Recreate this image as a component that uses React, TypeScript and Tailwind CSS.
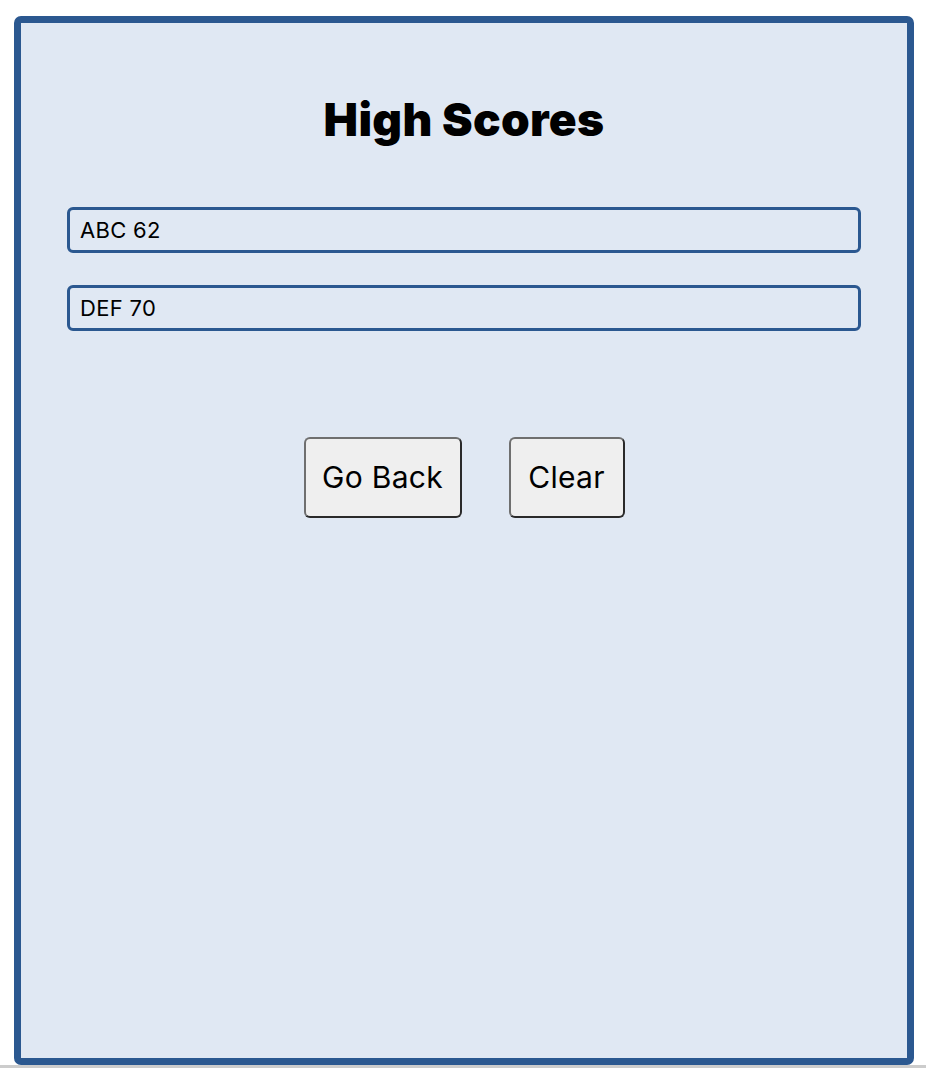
const scores = ['ABC 62', 'DEF 70'];

export default function App() {
  return (
    <div className="min-h-[1076px] bg-white pl-[14px] pr-[12px] pt-[16px] font-['Inter',sans-serif] text-black">
      <div className="flex h-[1049px] flex-col rounded-[7px] border-[7px] border-[#2b5890] bg-[#e0e8f3] px-[46px]">
        <h1 className="mt-[66px] text-center text-[46px] font-black leading-[60px] tracking-[0.3px]">High Scores</h1>
        <ul className="mt-[58px] flex flex-col gap-[32px]">
          {scores.map((s) => (
            <li
              key={s}
              className="flex h-[46px] items-center rounded-[6px] border-[3px] border-[#2b5890] px-[10px] text-[22px] tracking-[0.3px]"
            >
              {s}
            </li>
          ))}
        </ul>
        <div className="mt-[106px] flex justify-center gap-[47px]">
          <button className="h-[81px] w-[158px] rounded-[6px] border-2 border-[#6f6f6f] border-b-[#2a2a2a] border-r-[#2a2a2a] bg-[#efefef] text-[30px] tracking-[0.3px]">
            Go Back
          </button>
          <button className="h-[81px] w-[116px] rounded-[6px] border-2 border-[#6f6f6f] border-b-[#2a2a2a] border-r-[#2a2a2a] bg-[#efefef] text-[30px] tracking-[0.3px]">
            Clear
          </button>
        </div>
      </div>
      <div className="h-[3px] bg-[#cccccc] -mx-[14px] mt-0" />
    </div>
  );
}
